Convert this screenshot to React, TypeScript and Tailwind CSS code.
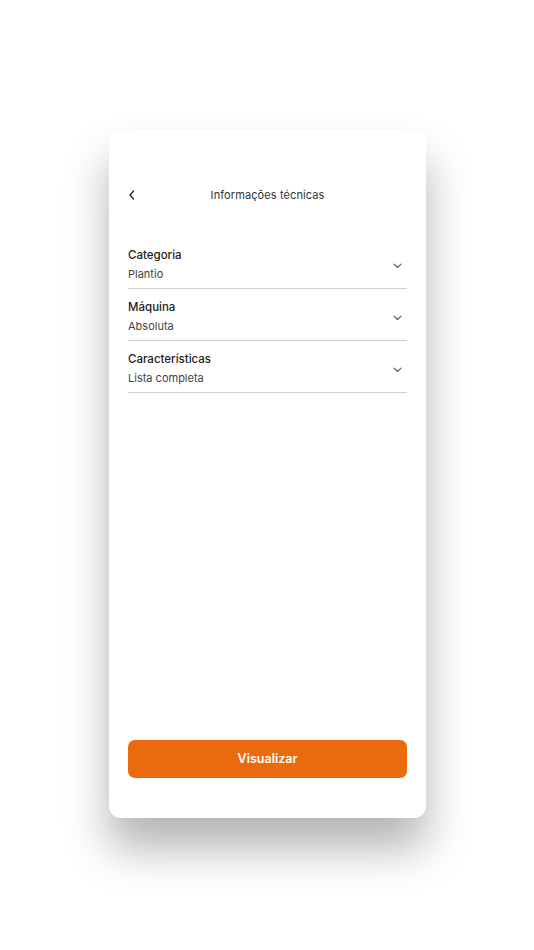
import React from "react";

const rows = [
  { label: "Categoria", value: "Plantio" },
  { label: "Máquina", value: "Absoluta" },
  { label: "Características", value: "Lista completa" },
];

function ChevronDown() {
  return (
    <svg width="9" height="6" viewBox="0 0 9 6" fill="none">
      <path d="M1 1.2l3.5 3.3L8 1.2" stroke="#555" strokeWidth="1.1" strokeLinecap="round" strokeLinejoin="round" />
    </svg>
  );
}

export default function App() {
  return (
    <div className="w-[534px] h-[950px] bg-white pt-[130px]" style={{ fontFamily: "Inter, 'Noto Sans', sans-serif" }}>
      <div className="ml-[109px] w-[317px] h-[688px] bg-white rounded-[12px] shadow-[0_30px_45px_rgba(0,0,0,0.3)] flex flex-col px-[19px] pt-[55px] pb-[40px]">
        <div className="h-5 flex items-center relative">
          <svg width="8" height="12" viewBox="0 0 8 12" fill="none" className="absolute left-0 top-1/2 -translate-y-1/2">
            <path d="M5.5 2L2 6l3.5 4" stroke="#222" strokeWidth="1.3" strokeLinecap="round" strokeLinejoin="round" />
          </svg>
          <div className="flex-1 text-center text-[11px] text-[#333] tracking-[0.1px]">Informações técnicas</div>
        </div>
        <div className="mt-[32px] flex flex-col">
          {rows.map((r) => (
            <div key={r.label} className="flex items-center justify-between border-b border-[#d0d0d0] pt-[10px] pb-[6px]">
              <div className="flex flex-col gap-[3px]">
                <div className="text-[11.5px] leading-4 font-medium text-[#222]">{r.label}</div>
                <div className="text-[11px] leading-4 text-[#444]">{r.value}</div>
              </div>
              <div className="pr-[5px] pt-[2px]">
                <ChevronDown />
              </div>
            </div>
          ))}
        </div>
        <div className="flex-1" />
        <button className="h-[38px] w-full rounded-[7px] bg-[#ec6a0e] text-white text-[12.5px] font-semibold">Visualizar</button>
      </div>
    </div>
  );
}
